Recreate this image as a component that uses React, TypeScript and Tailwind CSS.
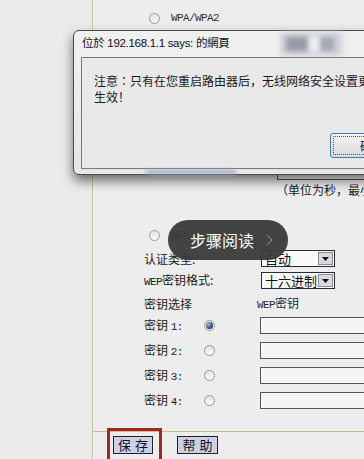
import React from "react";

const CJK = '"Noto Sans CJK SC", "Noto Sans", sans-serif';
const MONO = '"Liberation Mono", monospace';

function Radio({ checked = false }: { checked?: boolean }) {
  return (
    <span className="relative inline-flex h-[11px] w-[11px] shrink-0 items-center justify-center rounded-full border border-[#9a9a9a] bg-[linear-gradient(#e2e2e2,#fafafa)]">
      {checked && (
        <span className="h-[7px] w-[7px] rounded-full bg-[radial-gradient(circle_at_35%_35%,#9cc0e6,#1d3a60_70%)]" />
      )}
    </span>
  );
}

function Ascii({ children }: { children: React.ReactNode }) {
  return (
    <span className="text-[11px] tracking-[-0.6px]" style={{ fontFamily: MONO }}>
      {children}
    </span>
  );
}

function Select({ value }: { value: string }) {
  return (
    <div className="flex h-[17px] w-[74px] items-center border border-[#1f2d3d] bg-[#fafafa]">
      <div className="flex-1 pl-[3px] text-[13px] leading-[15px] text-[#111]">{value}</div>
      <div className="mr-[1px] flex h-[13px] w-[15px] items-center justify-center border border-[#8c8c8c] bg-[#d9d9d9]">
        <svg width="7" height="4" viewBox="0 0 7 4">
          <polygon points="0,0 7,0 3.5,4" fill="#111" />
        </svg>
      </div>
    </div>
  );
}

function KeyRow({ n, checked, mt }: { n: number; checked?: boolean; mt: string }) {
  return (
    <div className={`flex h-[17px] items-center ${mt}`}>
      <div className="w-[60px] text-[12px] leading-[16px] text-[#222]">
        密钥 <Ascii>{n}:</Ascii>
      </div>
      <Radio checked={checked} />
      <div className="ml-[45px] h-[17px] flex-1 border border-[#555] bg-[#f5f5f5]" />
    </div>
  );
}

export default function App() {
  return (
    <div
      className="relative flex h-[459px] w-[364px] overflow-hidden bg-[#ececec]"
      style={{ fontFamily: CJK }}
    >
      {/* left column */}
      <div className="h-full w-[93px] shrink-0 border-r border-[#cdbfa9] bg-[#ebebeb]" />

      {/* right content */}
      <div className="flex h-full flex-1 flex-col bg-[#ededed]">
        <div className="flex h-[36px] items-center pl-[56px]">
          <Radio />
          <span className="ml-[11px] text-[11px] tracking-[-0.6px] text-[#333]" style={{ fontFamily: MONO }}>
            WPA/WPA2
          </span>
        </div>
        <div className="h-[130px]" />
        <div className="ml-[184px] h-[14px] border border-[#555] bg-[#f5f5f5]" />
        <div className="mt-[2px] flex h-[16px] items-center whitespace-nowrap pl-[183px] text-[12px] text-[#222]">
          （单位为秒，最小
        </div>
        <div className="mt-[29px] flex h-[16px] items-center pl-[56px]">
          <Radio />
          <span className="ml-[11px] text-[11px] tracking-[-0.6px] text-[#333]" style={{ fontFamily: MONO }}>
            WEP
          </span>
        </div>

        <div className="pl-[51px]">
          <div className="mt-[7px] flex h-[17px] items-center">
            <div className="w-[117px] text-[12px] leading-[16px] text-[#222]">认证类型:</div>
            <Select value="自动" />
          </div>
          <div className="mt-[5px] flex h-[17px] items-center">
            <div className="w-[117px] text-[12px] leading-[16px] text-[#222]">
              <Ascii>WEP</Ascii>密钥格式:
            </div>
            <Select value="十六进制" />
          </div>
          <div className="mt-[7px] flex h-[16px] items-center">
            <div className="w-[113px] text-[12px] leading-[16px] text-[#222]">密钥选择</div>
            <div className="text-[12px] leading-[16px] text-[#1e2e3a]">
              <Ascii>WEP</Ascii>密钥
            </div>
          </div>
          <KeyRow n={1} checked mt="mt-[5px]" />
          <KeyRow n={2} mt="mt-[8px]" />
          <KeyRow n={3} mt="mt-[8px]" />
          <KeyRow n={4} mt="mt-[8px]" />
        </div>

        <div className="mt-[22px] border-t border-[#cbb896]" />
        <div className="mt-[4px] flex gap-[24px] pl-[20px]">
          <div className="flex h-[18px] w-[40px] items-center justify-center border border-[#222] bg-[#cdd1e8] text-[13px] tracking-[4px] text-[#111]">
            <span className="pl-[4px]">保存</span>
          </div>
          <div className="flex h-[18px] w-[41px] items-center justify-center border border-[#222] bg-[#cdd1e8] text-[13px] tracking-[4px] text-[#111]">
            <span className="pl-[4px]">帮助</span>
          </div>
        </div>
      </div>

      {/* red annotation box */}
      <div className="absolute left-[107px] top-[428px] h-[40px] w-[55px] border-[3px] border-[#a3271f]" />

      {/* alert dialog */}
      <div className="absolute left-[73px] top-[30px] h-[145px] w-[330px] rounded-[6px] border border-[#4a4a4a] bg-[linear-gradient(#f0f0f0,#e6e6e6)] shadow-[0_6px_12px_rgba(0,0,0,0.55)]">
        <div className="relative flex h-[26px] items-center pl-[8px]">
          <span className="text-[11.5px] tracking-[-0.3px] text-[#111]" style={{ fontFamily: '"Liberation Sans", "Noto Sans CJK TC", sans-serif' }}>
            位於 192.168.1.1 says: 的網頁
          </span>
          <div className="absolute left-[206px] top-[1px] flex h-[24px] w-[62px] items-center rounded-[4px] bg-[#cfd2d8] blur-[2.5px]">
            <div className="ml-[6px] h-[14px] w-[22px] bg-[#959ba5]" />
            <div className="h-[14px] w-[12px] bg-[#eef0f3]" />
            <div className="h-[14px] w-[14px] bg-[#a3a8b1]" />
          </div>
        </div>
        <div className="relative ml-[7px] h-[112px] border border-[#7a7a7a] bg-[#e9e9e9]">
          <div className="whitespace-nowrap pl-[12px] pt-[15px] text-[12px] leading-[16px] text-[#1a1a1a]">
            <div>
              注意<span style={{ fontFamily: '"Noto Sans CJK JP", sans-serif' }}>：</span>只有在您重启路由器后，无线网络安全设置更
            </div>
            <div>生效！</div>
          </div>
          <div className="absolute left-[248px] top-[75px] flex h-[25px] w-[75px] items-center rounded-[3px] border border-[#3c7fb1] bg-[linear-gradient(#f4f4f4,#dadada)] p-[2px]">
            <div className="flex h-full w-full items-center border border-dotted border-[#555] pl-[26px] text-[12px] text-[#111]">
              确定
            </div>
          </div>
        </div>
        <div className="absolute left-[72px] top-[139px] h-[4px] w-[90px] rounded-full bg-[#9ea6c2] blur-[2px]" />
      </div>

      {/* step reading pill */}
      <div className="absolute left-[168px] top-[220px] flex h-[40px] w-[120px] items-center rounded-full bg-[#3a3a3a]/95 pl-[22px]">
        <span className="text-[16px] text-white">步骤阅读</span>
        <svg className="ml-[12px]" width="7" height="12" viewBox="0 0 7 12">
          <polyline points="1,1 6,6 1,11" fill="none" stroke="#9a9a9a" strokeWidth="1" />
        </svg>
      </div>
    </div>
  );
}
